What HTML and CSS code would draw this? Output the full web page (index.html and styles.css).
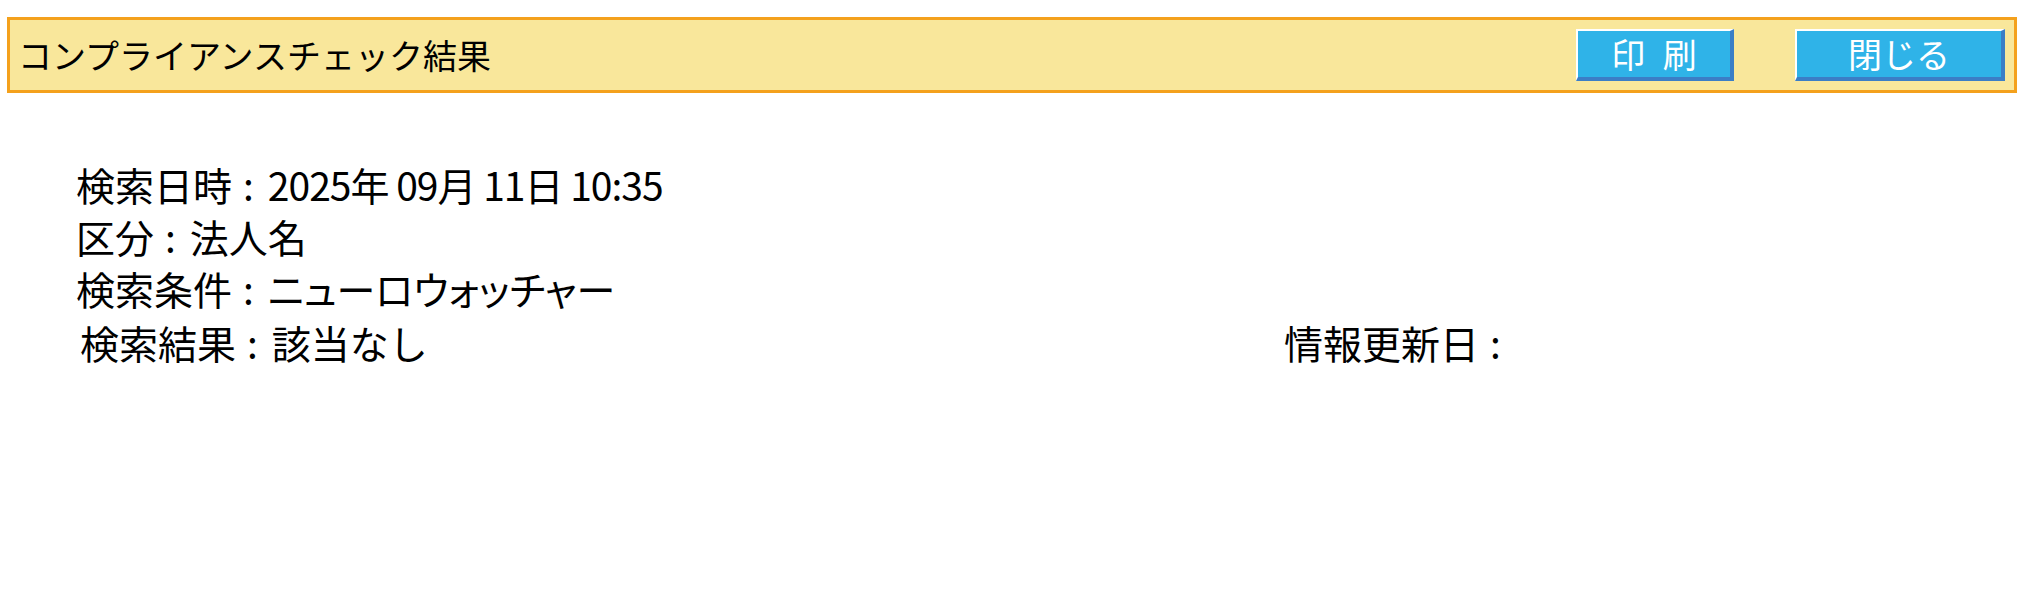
FILE: index.html
```html
<!DOCTYPE html>
<html lang="ja">
<head>
<meta charset="utf-8">
<title>コンプライアンスチェック結果</title>
<link rel="stylesheet" href="styles.css">
</head>
<body>
<header class="titlebar">
  <h1 class="title">コンプライアンスチェック結果</h1>
  <div class="actions">
    <button class="btn btn-print" type="button"><span class="spaced">印 刷</span></button>
    <button class="btn btn-close" type="button">閉じる</button>
  </div>
</header>
<main class="info">
  <div class="line"><span class="label">検索日時</span><span class="sep">:</span><span class="value num">2025年 09月 11日 10:35</span></div>
  <div class="line"><span class="label">区分</span><span class="sep">:</span><span class="value">法人名</span></div>
  <div class="line"><span class="label">検索条件</span><span class="sep">:</span><span class="value kana">ニューロウォッチャー</span></div>
  <div class="line result-row">
    <span class="result"><span class="label">検索結果</span><span class="sep">:</span><span class="value">該当なし</span></span>
    <span class="updated"><span class="label">情報更新日</span><span class="sep">:</span></span>
  </div>
</main>
</body>
</html>
```

FILE: styles.css
```css
html, body {
  margin: 0;
  padding: 0;
  background: #ffffff;
}

body {
  font-family: "Noto Sans CJK JP", "Noto Sans", sans-serif;
  color: #000000;
}

.titlebar {
  box-sizing: border-box;
  width: 2010px;
  height: 76px;
  margin: 17px 0 0 7px;
  padding: 0 9px 0 8px;
  background: #f9e79b;
  border: 3px solid #f4a11c;
  display: flex;
  align-items: center;
  justify-content: space-between;
}

.title {
  margin: 0;
  font-size: 34px;
  font-weight: normal;
  line-height: 40px;
  color: #000000;
}

.actions {
  display: flex;
  align-items: center;
  gap: 61px;
}

.btn {
  box-sizing: border-box;
  height: 52px;
  margin: 0;
  padding: 0;
  background: #2fb3e8;
  color: #ffffff;
  font-family: "Noto Sans CJK JP", "Noto Sans", sans-serif;
  font-size: 34px;
  line-height: 44px;
  border-style: solid;
  border-width: 2px 4px 4px 2px;
  border-color: #ffffff #3b7ec6 #3b7ec6 #ffffff;
  cursor: pointer;
}

.btn-print {
  width: 158px;
}

.btn-close {
  width: 210px;
}

.spaced {
  word-spacing: 10px;
}

.info {
  margin-top: 65px;
  padding-left: 76px;
  font-size: 39px;
}

.line {
  line-height: 52px;
  white-space: nowrap;
}

.sep {
  margin: 0 14px 0 11px;
}

.num {
  letter-spacing: -1px;
}

.kana {
  font-feature-settings: "palt";
}

.result-row {
  display: grid;
  grid-template-columns: 1204px auto;
  margin-top: 2px;
  padding-left: 4px;
}
```
